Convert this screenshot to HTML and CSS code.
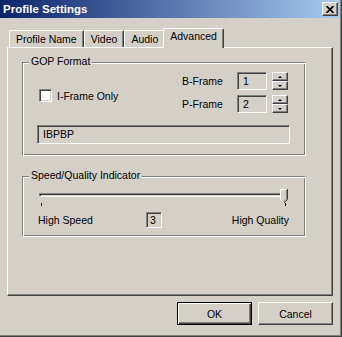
FILE: index.html
```html
<!DOCTYPE html>
<html>
<head>
    <title>Profile Settings</title>
    <link rel="stylesheet" href="styles.css">
</head>
<body>
    <div class="window">
        <div class="titlebar">
            <span class="title">Profile Settings</span>
            <button class="close-btn">
                <svg width="8" height="7" viewBox="0 0 8 7"><path d="M0.5 0 L7.5 7 M7.5 0 L0.5 7" stroke="#000" stroke-width="1.7" fill="none"/></svg>
            </button>
        </div>

        <div class="tabs">
            <div class="tab">Profile Name</div>
            <div class="tab">Video</div>
            <div class="tab">Audio</div>
            <div class="tab active">Advanced</div>
        </div>

        <div class="panel">
            <div class="group gop">
                <span class="group-title">GOP Format</span>
                <div class="gop-top">
                    <label class="check"><span class="checkbox"></span>I-Frame Only</label>
                    <div class="frames">
                        <div class="frame-row">
                            <span class="frame-label">B-Frame</span>
                            <span class="field num">1</span>
                            <span class="spinner"><span class="spin"><i class="arrow up"></i></span><span class="spin"><i class="arrow down"></i></span></span>
                        </div>
                        <div class="frame-row">
                            <span class="frame-label">P-Frame</span>
                            <span class="field num">2</span>
                            <span class="spinner"><span class="spin"><i class="arrow up"></i></span><span class="spin"><i class="arrow down"></i></span></span>
                        </div>
                    </div>
                </div>
                <div class="field pattern">IBPBP</div>
            </div>

            <div class="group speed">
                <span class="group-title">Speed/Quality Indicator</span>
                <div class="slider">
                    <div class="track"></div>
                    <svg class="thumb" width="8" height="14" viewBox="0 0 8 14">
                        <path d="M1 1 H7 V10 L4 13 L1 10 Z" fill="#d4d0c8"/>
                        <path d="M0.5 10.5 V0.5 H6.5" stroke="#fff" fill="none"/>
                        <path d="M0.5 10.5 L3.5 13.5" stroke="#fff" fill="none"/>
                        <path d="M7.5 0 V10.5 L4 14" stroke="#404040" fill="none"/>
                        <path d="M6.5 1 V10 L3.5 13" stroke="#808080" fill="none"/>
                    </svg>
                </div>
                <div class="ticks"><span></span><span></span></div>
                <div class="speed-labels">
                    <span>High Speed</span>
                    <span class="field value">3</span>
                    <span class="hq">High Quality</span>
                </div>
            </div>
        </div>

        <div class="actions">
            <button class="btn default">OK</button>
            <button class="btn">Cancel</button>
        </div>
    </div>
</body>
</html>
```

FILE: styles.css
```css
body {
    margin: 0;
    font-family: "Liberation Sans", Arial, sans-serif;
    font-size: 10.5px;
    color: #000;
    background: #d4d0c8;
}

.window {
    width: 342px;
    height: 337px;
    box-sizing: border-box;
    display: flex;
    flex-direction: column;
    background: #d4d0c8;
    border-right: 1px solid #404040;
    border-bottom: 1px solid #404040;
    box-shadow: inset -1px -1px #808080;
}

.titlebar {
    height: 18px;
    margin-right: 1px;
    padding: 0 2px 0 3px;
    display: flex;
    align-items: center;
    justify-content: space-between;
    background: linear-gradient(to right, #0a246a, #a6caf0);
}

.title {
    color: #fff;
    font-weight: bold;
    font-size: 11.5px;
}

.close-btn {
    width: 16px;
    height: 14px;
    padding: 0;
    display: flex;
    align-items: center;
    justify-content: center;
    background: #d4d0c8;
    border: 1px solid;
    border-color: #fff #404040 #404040 #fff;
    box-shadow: inset -1px -1px #808080;
}

/* tabs */
.tabs {
    display: flex;
    align-items: flex-end;
    height: 19px;
    margin: 10px 0 0 7px;
    padding-left: 2px;
}

.tab {
    height: 17px;
    box-sizing: border-box;
    padding: 2px 6px 0;
    line-height: 13px;
    border: 1px solid #fff;
    border-right-color: #404040;
    border-bottom: none;
    border-radius: 2px 2px 0 0;
    box-shadow: inset -1px 0 #808080;
    background: #d4d0c8;
}

.tab.active {
    position: relative;
    z-index: 1;
    height: 20px;
    padding-top: 1px;
    margin: 0 -2px -1px -2px;
}

.panel {
    width: 326px;
    height: 249px;
    box-sizing: border-box;
    margin-left: 7px;
    padding: 14px 0 0 14px;
    border: 1px solid #fff;
    border-right-color: #404040;
    border-bottom-color: #404040;
    box-shadow: inset -1px -1px #808080;
}

/* group boxes */
.group {
    width: 284px;
    box-sizing: border-box;
    display: flex;
    flex-direction: column;
    border: 1px solid #808080;
    border-right-color: #fff;
    border-bottom-color: #fff;
    box-shadow: inset 1px 1px #fff, inset -1px -1px #808080;
}

.group-title {
    align-self: flex-start;
    margin: -8px 0 0 6px;
    padding: 0 2px;
    line-height: 12px;
    background: #d4d0c8;
}

.gop {
    height: 94px;
}

.gop-top {
    display: flex;
    justify-content: space-between;
    margin-top: 5px;
}

.check {
    display: flex;
    align-items: center;
    gap: 5px;
    height: 13px;
    margin: 17px 0 0 16px;
}

.checkbox {
    width: 13px;
    height: 13px;
    box-sizing: border-box;
    background: #fff;
    border: 1px solid;
    border-color: #808080 #fff #fff #808080;
    box-shadow: inset 1px 1px #404040, inset -1px -1px #d4d0c8;
}

.frames {
    display: flex;
    flex-direction: column;
    gap: 5px;
    margin-right: 17px;
}

.frame-row {
    display: flex;
    align-items: center;
    height: 18px;
}

.frame-label {
    width: 55px;
}

.field {
    box-sizing: border-box;
    background: #d4d0c8;
    border: 1px solid;
    border-color: #808080 #fff #fff #808080;
    box-shadow: inset 1px 1px #404040, inset -1px -1px #d4d0c8;
}

.num {
    width: 30px;
    height: 18px;
    padding-left: 5px;
    line-height: 16px;
    margin-right: 5px;
}

.spinner {
    display: flex;
    flex-direction: column;
    width: 16px;
    height: 18px;
}

.spin {
    flex: 1;
    display: flex;
    align-items: center;
    justify-content: center;
    box-sizing: border-box;
    border: 1px solid;
    border-color: #fff #404040 #404040 #fff;
    box-shadow: inset -1px -1px #808080;
}

.arrow {
    width: 0;
    height: 0;
    border-left: 2px solid transparent;
    border-right: 2px solid transparent;
}

.arrow.up {
    border-bottom: 2px solid #000;
}

.arrow.down {
    border-top: 2px solid #000;
}

.pattern {
    width: 253px;
    height: 19px;
    margin: 12px 0 0 14px;
    padding-left: 5px;
    line-height: 17px;
}

/* speed / quality */
.speed {
    height: 61px;
    margin-top: 20px;
}

.slider {
    position: relative;
    width: 248px;
    height: 14px;
    margin: 8px 0 0 16px;
}

.track {
    height: 4px;
    margin-top: 4px;
    box-sizing: border-box;
    border: 1px solid;
    border-color: #808080 #fff #fff #808080;
    box-shadow: inset 1px 1px #404040;
}

.thumb {
    position: absolute;
    top: 0;
    right: -1px;
}

.ticks {
    display: flex;
    justify-content: space-between;
    width: 248px;
    height: 3px;
    box-sizing: border-box;
    margin-left: 16px;
    padding: 0 1px 0 2px;
}

.ticks span {
    width: 1px;
    background: #000;
}

.speed-labels {
    display: flex;
    align-items: center;
    height: 16px;
    margin-top: 6px;
    padding: 0 16px 0 15px;
}

.value {
    width: 16px;
    height: 16px;
    margin-left: 53px;
    padding-left: 3px;
    line-height: 14px;
}

.hq {
    margin-left: auto;
}

/* buttons */
.actions {
    display: flex;
    justify-content: flex-end;
    gap: 6px;
    margin-top: 6px;
    padding-right: 8px;
}

.btn {
    width: 75px;
    height: 23px;
    padding: 0;
    font-family: inherit;
    font-size: 10.5px;
    color: #000;
    background: #d4d0c8;
    border: 1px solid;
    border-color: #fff #404040 #404040 #fff;
    box-shadow: inset -1px -1px #808080;
}

.btn.default {
    border-color: #000;
    box-shadow: inset 1px 1px #fff, inset -1px -1px #404040, inset -2px -2px #808080;
}
```
